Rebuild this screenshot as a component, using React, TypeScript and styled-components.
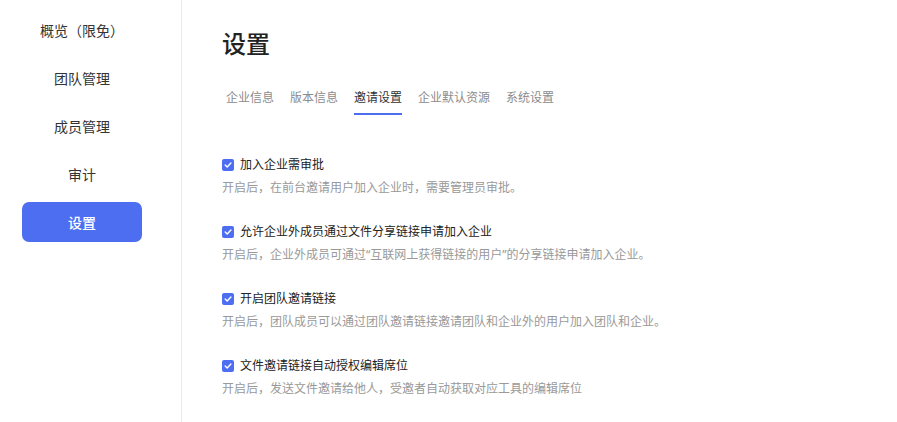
import styled, { createGlobalStyle } from 'styled-components';

const PRIMARY = '#4e6ef2';

const GlobalStyle = createGlobalStyle`
  html, body {
    margin: 0;
    padding: 0;
    background: #fff;
    font-family: 'Noto Sans', 'Noto Sans CJK SC', sans-serif;
  }
  * {
    box-sizing: border-box;
  }
`;

const Page = styled.div`
  display: flex;
  width: 897px;
  height: 422px;
  overflow: hidden;
`;

const Sidebar = styled.nav`
  flex: 0 0 182px;
  display: flex;
  flex-direction: column;
  gap: 8px;
  padding-top: 10px;
  border-right: 1px solid #ebebeb;
`;

const MenuItem = styled.div<{ $active?: boolean }>`
  width: 120px;
  height: 40px;
  margin-left: 22px;
  display: flex;
  align-items: center;
  justify-content: center;
  border-radius: 7px;
  font-size: 14px;
  font-weight: ${({ $active }) => ($active ? 500 : 400)};
  color: ${({ $active }) => ($active ? '#fff' : '#333')};
  background: ${({ $active }) => ($active ? PRIMARY : 'transparent')};
`;

const Main = styled.main`
  flex: 1;
  padding: 28px 0 0 40px;
`;

const Title = styled.h1`
  margin: 0;
  font-size: 24px;
  line-height: 32px;
  font-weight: 500;
  color: #222;
`;

const Tabs = styled.div`
  display: flex;
  gap: 16px;
  margin: 28px 0 0 4px;
`;

const Tab = styled.div<{ $active?: boolean }>`
  font-size: 12px;
  line-height: 20px;
  padding-bottom: 5px;
  color: ${({ $active }) => ($active ? '#333' : '#8c8c8c')};
  border-bottom: 2px solid ${({ $active }) => ($active ? PRIMARY : 'transparent')};
`;

const Options = styled.div`
  display: flex;
  flex-direction: column;
  gap: 24px;
  margin-top: 40px;
`;

const Option = styled.div`
  display: flex;
  flex-direction: column;
  gap: 3px;
`;

const OptionHead = styled.label`
  display: flex;
  align-items: center;
  gap: 6px;
  font-size: 12px;
  line-height: 20px;
  color: #222;
`;

const Check = styled.span`
  width: 12px;
  height: 12px;
  border-radius: 2px;
  background: ${PRIMARY};
  display: flex;
  align-items: center;
  justify-content: center;
`;

const OptionDesc = styled.div`
  font-size: 12px;
  line-height: 20px;
  color: #999;
`;

const menu = ['概览（限免）', '团队管理', '成员管理', '审计', '设置'];
const tabs = ['企业信息', '版本信息', '邀请设置', '企业默认资源', '系统设置'];
const options = [
  { title: '加入企业需审批', desc: '开启后，在前台邀请用户加入企业时，需要管理员审批。' },
  {
    title: '允许企业外成员通过文件分享链接申请加入企业',
    desc: '开启后，企业外成员可通过“互联网上获得链接的用户”的分享链接申请加入企业。',
  },
  { title: '开启团队邀请链接', desc: '开启后，团队成员可以通过团队邀请链接邀请团队和企业外的用户加入团队和企业。' },
  { title: '文件邀请链接自动授权编辑席位', desc: '开启后，发送文件邀请给他人，受邀者自动获取对应工具的编辑席位' },
];

function CheckMark() {
  return (
    <svg width='8' height='8' viewBox='0 0 8 8' fill='none'>
      <path d='M1.2 4.1 3.2 6 6.9 2.1' stroke='#fff' strokeWidth='1.4' strokeLinecap='round' strokeLinejoin='round' />
    </svg>
  );
}

export default function App() {
  return (
    <>
      <GlobalStyle />
      <Page>
        <Sidebar>
          {menu.map((m) => (
            <MenuItem key={m} $active={m === '设置'}>
              {m}
            </MenuItem>
          ))}
        </Sidebar>
        <Main>
          <Title>设置</Title>
          <Tabs>
            {tabs.map((t) => (
              <Tab key={t} $active={t === '邀请设置'}>
                {t}
              </Tab>
            ))}
          </Tabs>
          <Options>
            {options.map((o) => (
              <Option key={o.title}>
                <OptionHead>
                  <Check>
                    <CheckMark />
                  </Check>
                  {o.title}
                </OptionHead>
                <OptionDesc>{o.desc}</OptionDesc>
              </Option>
            ))}
          </Options>
        </Main>
      </Page>
    </>
  );
}
